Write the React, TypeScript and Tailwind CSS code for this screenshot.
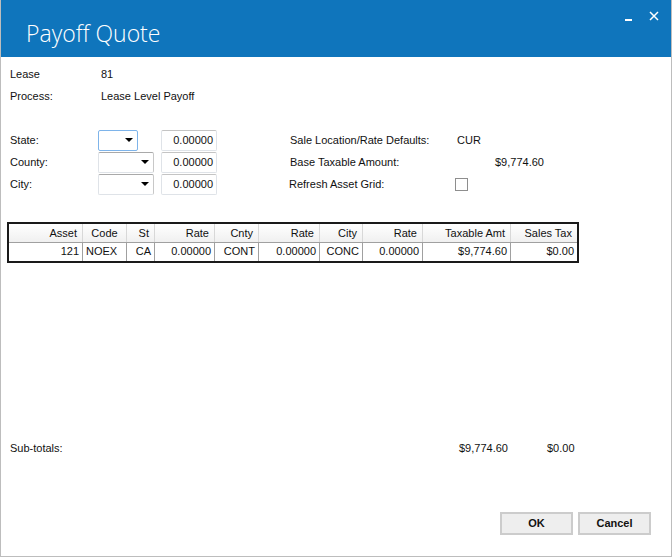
const columns = [
  { label: 'Asset', value: '121', width: 'w-[74px]', align: 'text-right' },
  { label: 'Code', value: 'NOEX', width: 'w-[44px]', align: 'text-left', head: 'text-center' },
  { label: 'St', value: 'CA', width: 'w-[28px]', align: 'text-right' },
  { label: 'Rate', value: '0.00000', width: 'w-[60px]', align: 'text-right' },
  { label: 'Cnty', value: 'CONT', width: 'w-[44px]', align: 'text-right' },
  { label: 'Rate', value: '0.00000', width: 'w-[61px]', align: 'text-right' },
  { label: 'City', value: 'CONC', width: 'w-[43px]', align: 'text-right' },
  { label: 'Rate', value: '0.00000', width: 'w-[60px]', align: 'text-right' },
  { label: 'Taxable Amt', value: '$9,774.60', width: 'w-[88px]', align: 'text-right' },
  { label: 'Sales Tax', value: '$0.00', width: 'w-[66px]', align: 'text-right' },
]

function Caret({ className }: { className: string }) {
  return <span className={`border-x-[4px] border-t-[4px] border-x-transparent border-t-black ${className}`} />
}

function Combo({ focused }: { focused?: boolean }) {
  return (
    <div
      className={`flex h-[21px] items-center justify-end rounded-[2px] border bg-white ${
        focused ? 'w-[40px] border-[#7eb4ea] pr-[3px]' : 'w-[56px] border-[#dfe3e8] border-t-[#a9a9a9] border-r-[#c8c8c8] pr-[3px]'
      }`}
    >
      <Caret className="mr-[1px]" />
    </div>
  )
}

function RateBox() {
  return (
    <div className="flex h-[21px] w-[56px] items-center justify-end rounded-[2px] border border-[#dfe3e8] border-t-[#c4c4c4] pr-[3px]">
      0.00000
    </div>
  )
}

function FormRow({ label, focused, children }: { label: string; focused?: boolean; children: React.ReactNode }) {
  return (
    <div className="flex h-[22px] items-center">
      <span className="w-[88px]">{label}</span>
      <div className="w-[63px]">
        <Combo focused={focused} />
      </div>
      <RateBox />
      <div className="ml-[73px] flex items-center">{children}</div>
    </div>
  )
}

export default function App() {
  return (
    <div className="flex h-[557px] w-[672px] flex-col overflow-hidden border-x border-b border-[#bdbdbd] bg-white font-['Liberation_Sans',Arial,sans-serif] text-[11px] leading-none text-[#111]">
      <header className="-mx-px flex h-[57px] shrink-0 items-start justify-between bg-[#0f75bc] text-white">
        <h1 className="ml-[26px] mt-[18px] font-['Open_Sans',sans-serif] text-[23px] font-light leading-[30px]">Payoff Quote</h1>
        <div className="mr-[13px] mt-[10px] flex items-center gap-[17px]">
          <span className="mt-[9px] h-[2px] w-[7px] bg-white" />
          <svg width="10" height="10" viewBox="0 0 10 10" stroke="white" strokeWidth="1.5">
            <path d="M1 1l8 8M9 1l-8 8" />
          </svg>
        </div>
      </header>

      <main className="flex flex-1 flex-col pl-[9px] pr-[20px]">
        <div className="mt-[6px] flex h-[22px] items-center">
          <span className="w-[91px]">Lease</span>
          <span>81</span>
        </div>
        <div className="flex h-[22px] items-center">
          <span className="w-[91px]">Process:</span>
          <span>Lease Level Payoff</span>
        </div>

        <div className="mt-[22px]">
          <FormRow label="State:" focused>
            <span className="w-[167px]">Sale Location/Rate Defaults:</span>
            <span>CUR</span>
          </FormRow>
          <FormRow label="County:">
            <span className="w-[205px]">Base Taxable Amount:</span>
            <span>$9,774.60</span>
          </FormRow>
          <FormRow label="City:">
            <span className="-ml-px w-[166px]">Refresh Asset Grid:</span>
            <span className="h-[13px] w-[13px] border border-[#8e8e8e]" />
          </FormRow>
        </div>

        <div className="-ml-[3px] mt-[27px] w-[572px] border-2 border-[#1a1a1a]">
          <div className="flex h-[19px] border-b border-[#a0a0a0] bg-gradient-to-b from-white to-[#f0f0f0]">
            {columns.map((col, i) => (
              <div
                key={i}
                className={`${col.width} ${col.head ?? col.align} shrink-0 border-r border-[#d8d8d8] px-[5px] leading-[18px] last:border-r-0`}
              >
                {col.label}
              </div>
            ))}
          </div>
          <div className="flex h-[18px]">
            {columns.map((col, i) => (
              <div
                key={i}
                className={`${col.width} ${col.align} shrink-0 border-r border-[#a0a0a0] px-[3px] leading-[17px] last:border-r-0`}
              >
                {col.value}
              </div>
            ))}
          </div>
        </div>

        <div className="mt-[178px] flex h-[14px] items-center">
          <span className="w-[449px]">Sub-totals:</span>
          <span className="w-[88px]">$9,774.60</span>
          <span>$0.00</span>
        </div>

        <div className="mt-[57px] flex justify-end gap-[5px]">
          <button className="h-[23px] w-[73px] border-2 border-[#cccccc] bg-[#eeeeee] font-bold">OK</button>
          <button className="h-[23px] w-[73px] border-2 border-[#cccccc] bg-[#eeeeee] font-bold">Cancel</button>
        </div>
      </main>
    </div>
  )
}
